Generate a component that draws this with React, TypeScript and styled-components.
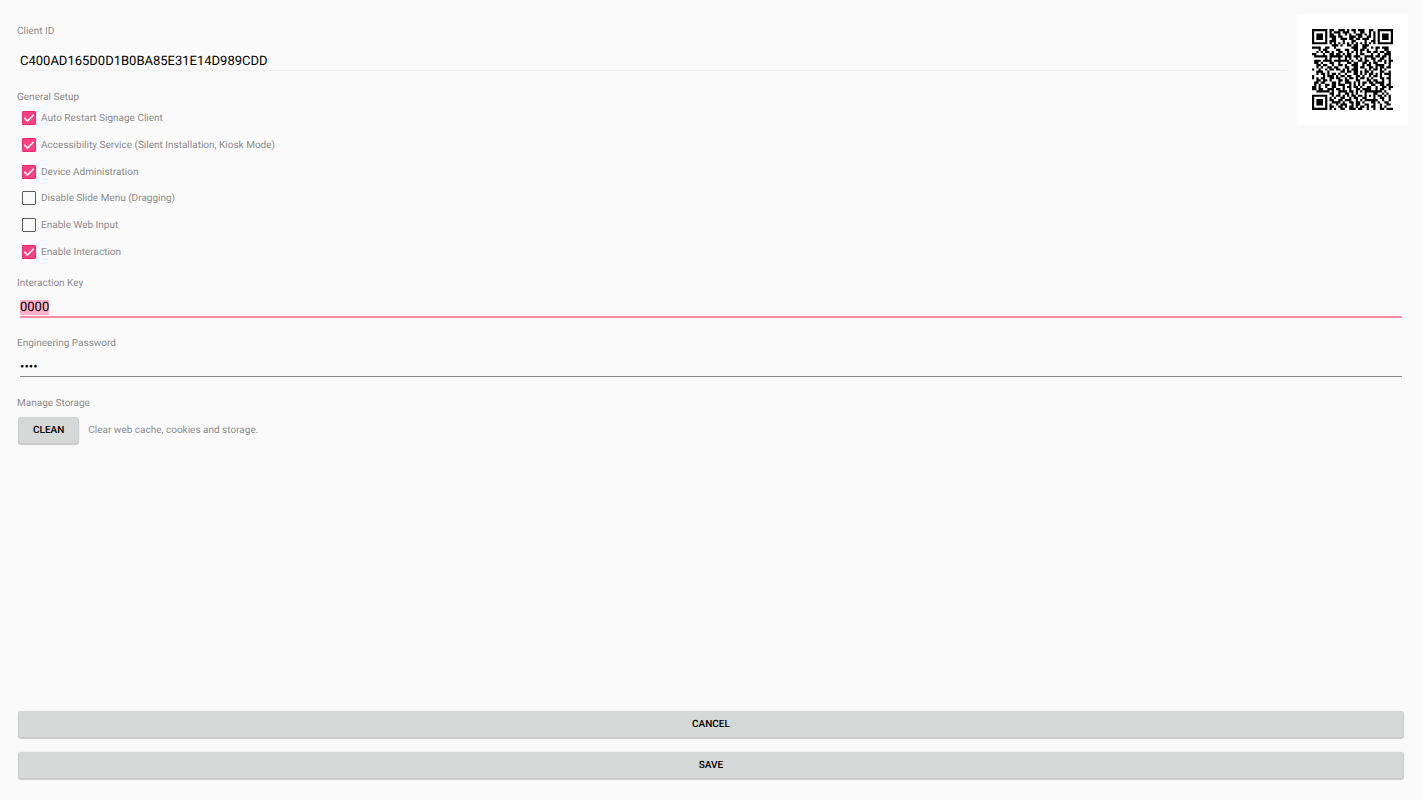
import React, { useEffect, useRef, useState } from 'react';
import styled, { createGlobalStyle } from 'styled-components';

const GlobalStyle = createGlobalStyle`
  * { box-sizing: border-box; }
  body {
    margin: 0;
    background: #fafafa;
    color: #000;
    font-family: Roboto, "Liberation Sans", sans-serif;
    text-rendering: geometricPrecision;
  }
`;

const Page = styled.form`
  display: flex;
  flex-direction: column;
  min-height: 100vh;
  padding: 14px 14px 20px 17px;
`;

const Top = styled.div`
  display: flex;
  align-items: flex-start;
  gap: 3px;
`;

const Identity = styled.div`
  flex: 1;
  min-width: 0;
  padding-top: 10px;
`;

const Caption = styled.label`
  display: block;
  font-size: 10px;
  line-height: 16px;
  color: #8c8c8c;
`;

const Field = styled.div<{ $tall?: boolean }>`
  display: flex;
  flex-direction: column;
  height: ${(p) => (p.$tall ? 66 : 60)}px;
`;

const TextBox = styled.input<{ $tone: 'faint' | 'accent' | 'normal'; $tall?: boolean }>`
  margin: 0 6px 0 3px;
  padding: ${(p) => (p.$tall ? 13 : 7)}px 0 0;
  border: 0;
  border-bottom: ${(p) =>
    ({ faint: '1px solid #eeeeee', accent: '2px solid #ff8aa8', normal: '1px solid #8c8c8c' })[p.$tone]};
  border-radius: 0;
  background: transparent;
  outline: none;
  color: #000;
  font-family: inherit;
  font-size: 13px;
  line-height: 17px;
  text-rendering: inherit;
  height: ${(p) => (p.$tall ? 31 : p.$tone === 'accent' ? 26 : 25)}px;
  &::selection {
    background: #ffb0cb;
    color: #000;
  }
`;

const Setup = styled.fieldset`
  margin: 0;
  padding: 0;
  border: 0;
`;

const Legend = styled.legend`
  padding: 0;
  font-size: 10px;
  line-height: 16px;
  color: #8c8c8c;
`;

const Options = styled.div`
  display: grid;
  grid-template-rows: repeat(6, 1fr);
  height: 160px;
  margin: -1px 0 11px 5px;
`;

const Option = styled.label`
  display: flex;
  align-items: center;
  gap: 5px;
`;

const Tick = styled.span`
  display: grid;
  width: 14px;
  height: 14px;
  > * { grid-area: 1 / 1; }
  svg { pointer-events: none; }
`;

const TickInput = styled.input`
  appearance: none;
  width: 14px;
  height: 14px;
  margin: 0;
  border: 1px solid #5c5c5c;
  border-radius: 1px;
  &:checked {
    border-color: #f5246c;
    background: #ff4081;
  }
`;

const Storage = styled.div`
  display: flex;
  align-items: center;
  gap: 10px;
  margin: 5px 0 0 2px;
`;

const Note = styled.span`
  padding-top: 2px;
  font-size: 10px;
  line-height: 16px;
  color: #8c8c8c;
`;

const Button = styled.button`
  height: 26px;
  padding: 2px 14px 0;
  border: 0;
  border-radius: 2px;
  background: #d6d7d7;
  box-shadow: 0 1px 1px 1px #cacaca;
  color: #000;
  font-family: inherit;
  font-size: 10px;
  font-weight: 500;
  line-height: 16px;
  text-rendering: inherit;
`;

const Footer = styled.div`
  display: grid;
  gap: 15px;
  margin: auto 5px 0 2px;
  padding-bottom: 2px;
`;

const QrFrame = styled.div`
  flex: none;
  padding: 15px;
  background: #fff;
  svg { display: block; }
`;

const QR_ROWS = [
  '#######.##..###.#.##.###..##..#######',
  '#.....#.#.###.###..#..##..#.#.#.....#',
  '#.###.#.##..#..#.#..###.#.#.#.#.###.#',
  '#.###.#.###.##...###.##..##.#.#.###.#',
  '#.###.#..##..###.##.##.###..#.#.###.#',
  '#.....#.###...#...##....#..##.#.....#',
  '#######.#.#.#.#.#.#.#.#.#.#.#.#######',
  '.........###.#..##.##..###...........',
  '####..##..#.......###..##..#.##.###..',
  '...#.##....##..##..##.##.#...#...##..',
  '..#.#.##.#..##..#.#.#.#..##.##.##.##.',
  '##...#..##.##.#.##..#.##...#..#..###.',
  '.######.######.###.###..####.##.##.#.',
  '......#.#...#..#.#..#.#.#..##..##..#.',
  '.###.####.#######.#..##.##..#.##.#.##',
  '.##.#...##..#...##.##..##.#.##...#.#.',
  '..##.##..#..##.#..###..#.##..####..#.',
  '..#.#..##.##...##..##.##..##.#.##.##.',
  '#..#..#.##.##.#.#.###...#.#.##.#.#...',
  '..###..#.....##.##.##.#.##.#...##..#.',
  '..#.##.#.##.#..#...##.#.#.##.#.#.###.',
  '#....#.###.#.##.##..##.#..#.##.#...#.',
  '#.#.##..##.##..#.##.#.##.#.#...##.##.',
  '..##.##.#...##.##...##...##.##..#..#.',
  '.##.##...##.#..###.#.#.##.##.####..#.',
  '.#.#..##.##.###..#.#.#.#...##..##.##.',
  '##.#..#..##...#.##.##.#..##..#..##.##',
  '##.##..###.##.#..#..##.####..#.##..#.',
  '..######.#..####.##.#.#.########.#...',
  '........##..#..##.#.#...#...##..#.#..',
  '#######..#.##.#.#.##.##.#.#.#.##.#.#.',
  '#.....#.#.#..##..#.##..##...#..##..#.',
  '#.###.#.##..##.###..#.#.######..#..#.',
  '#.###.#..####.#..##.##.#...##.#..##..',
  '#.###.#.#..#.###..#.##..##..#..#..##.',
  '#.....#.##..##.#.##.#.##.#.##..#.#...',
  '#######.#.#..##..###.##..#..#..##.###',
];

const qrPath = QR_ROWS.map((row, y) =>
  [...row].map((cell, x) => (cell === '#' ? `M${x} ${y}h1v1h-1z` : '')).join(''),
).join('');

function QrCode() {
  return (
    <QrFrame>
      <svg width="81" height="81" viewBox="0 0 37 37" role="img" aria-label="Client ID QR code">
        <path d={qrPath} />
      </svg>
    </QrFrame>
  );
}

const OPTIONS: [string, boolean][] = [
  ['Auto Restart Signage Client', true],
  ['Accessibility Service (Silent Installation, Kiosk Mode)', true],
  ['Device Administration', true],
  ['Disable Slide Menu (Dragging)', false],
  ['Enable Web Input', false],
  ['Enable Interaction', true],
];

function CheckOption({ label, initial }: { label: string; initial: boolean }) {
  const [on, setOn] = useState(initial);
  return (
    <Option>
      <Tick>
        <TickInput type="checkbox" checked={on} onChange={(e) => setOn(e.target.checked)} />
        {on && (
          <svg width="14" height="14" viewBox="0 0 14 14" fill="none" stroke="#fff" strokeWidth="1.6">
            <path d="M2.3 6.9 5.4 10 11.7 3.7" />
          </svg>
        )}
      </Tick>
      <Note>{label}</Note>
    </Option>
  );
}

export default function App() {
  const keyRef = useRef<HTMLInputElement>(null);

  useEffect(() => {
    keyRef.current?.focus();
    keyRef.current?.select();
  }, []);

  return (
    <>
      <GlobalStyle />
      <Page onSubmit={(e) => e.preventDefault()}>
        <Top>
          <Identity>
            <Field $tall>
              <Caption htmlFor="client-id">Client ID</Caption>
              <TextBox id="client-id" $tone="faint" $tall readOnly defaultValue="C400AD165D0D1B0BA85E31E14D989CDD" />
            </Field>
            <Setup>
              <Legend>General Setup</Legend>
              <Options>
                {OPTIONS.map(([label, initial]) => (
                  <CheckOption key={label} label={label} initial={initial} />
                ))}
              </Options>
            </Setup>
          </Identity>
          <QrCode />
        </Top>
        <Field>
          <Caption htmlFor="interaction-key">Interaction Key</Caption>
          <TextBox id="interaction-key" ref={keyRef} $tone="accent" defaultValue="0000" />
        </Field>
        <Field>
          <Caption htmlFor="password">Engineering Password</Caption>
          <TextBox id="password" type="password" $tone="normal" defaultValue="0000" />
        </Field>
        <Caption as="div">Manage Storage</Caption>
        <Storage>
          <Button type="button">CLEAN</Button>
          <Note>Clear web cache, cookies and storage.</Note>
        </Storage>
        <Footer>
          <Button type="button">CANCEL</Button>
          <Button type="submit">SAVE</Button>
        </Footer>
      </Page>
    </>
  );
}
